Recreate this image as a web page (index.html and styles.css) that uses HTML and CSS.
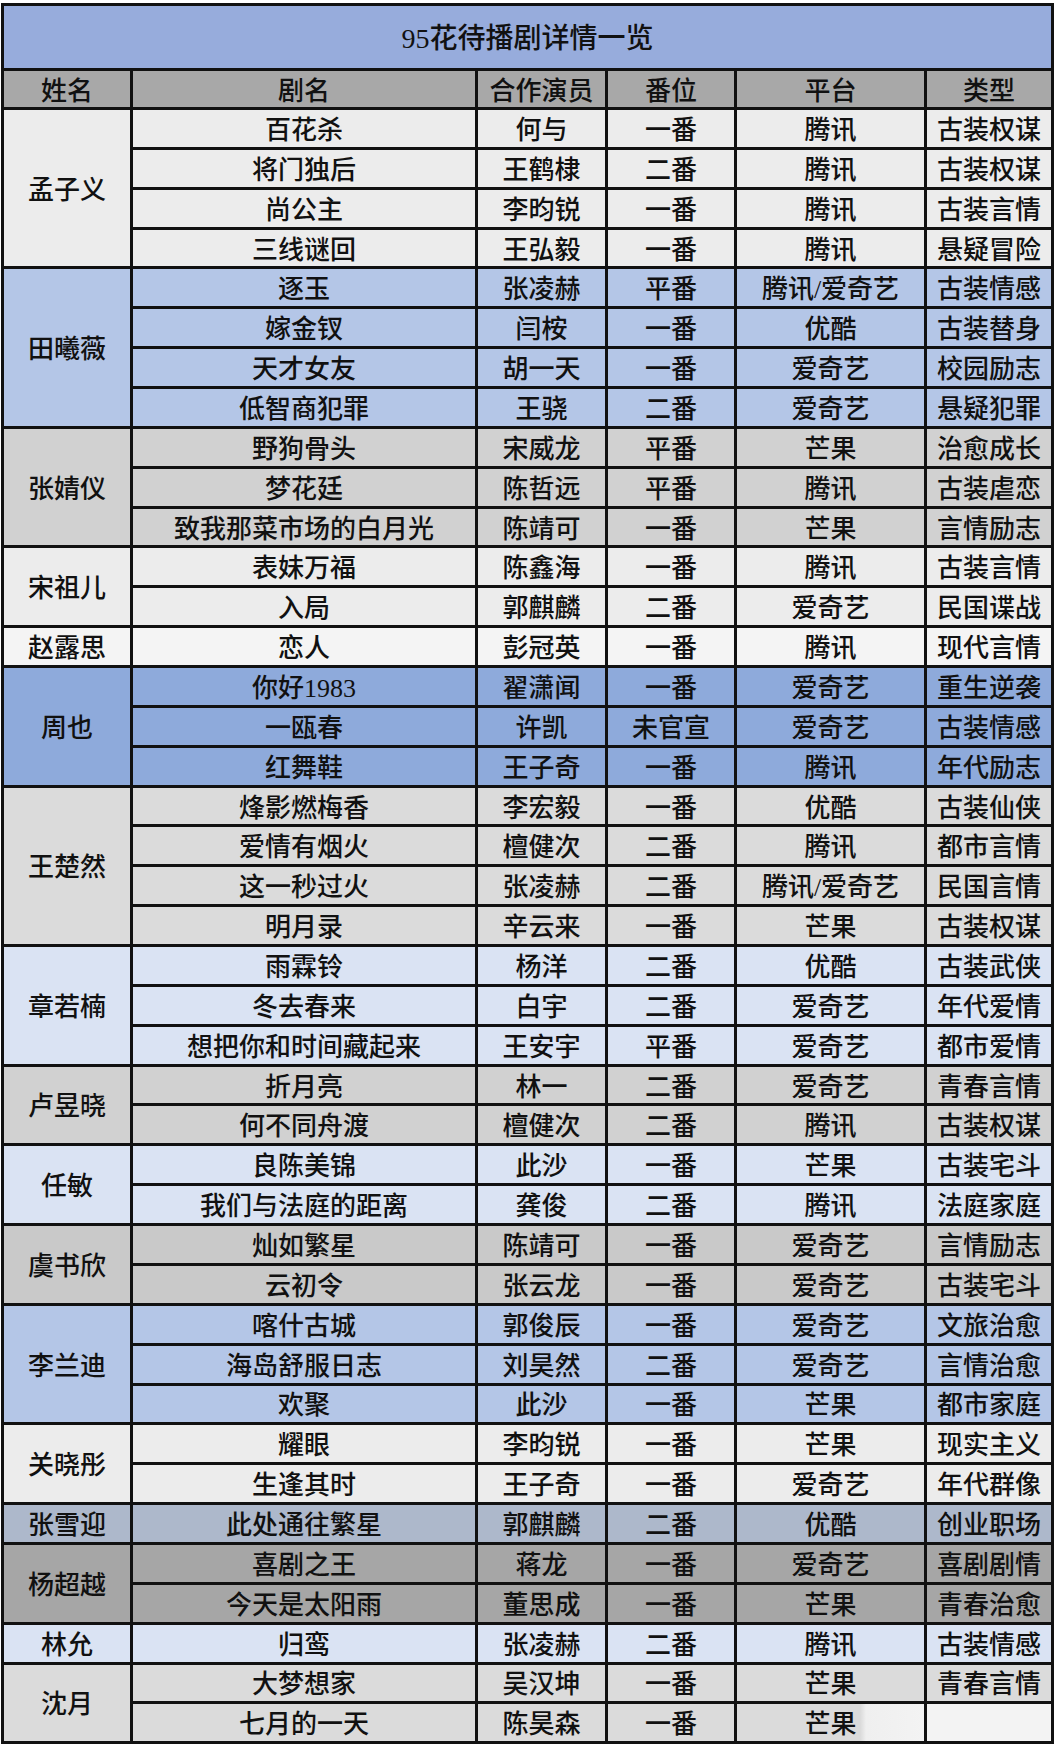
FILE: index.html
```html
<!DOCTYPE html>
<html lang="zh-CN">
<head>
<meta charset="utf-8">
<title>95花待播剧详情一览</title>
<link rel="stylesheet" href="styles.css">
</head>
<body>
<div class="sheet">
  <div class="title">95花待播剧详情一览</div>
  <div class="head">姓名</div><div class="head">剧名</div><div class="head">合作演员</div><div class="head">番位</div><div class="head">平台</div><div class="head">类型</div>

  <div class="grp g-light">
    <div class="cell name span4">孟子义</div>
    <div class="cell">百花杀</div><div class="cell">何与</div><div class="cell">一番</div><div class="cell">腾讯</div><div class="cell">古装权谋</div>
    <div class="cell">将门独后</div><div class="cell">王鹤棣</div><div class="cell">二番</div><div class="cell">腾讯</div><div class="cell">古装权谋</div>
    <div class="cell">尚公主</div><div class="cell">李昀锐</div><div class="cell">一番</div><div class="cell">腾讯</div><div class="cell">古装言情</div>
    <div class="cell">三线谜回</div><div class="cell">王弘毅</div><div class="cell">一番</div><div class="cell">腾讯</div><div class="cell">悬疑冒险</div>
  </div>

  <div class="grp g-blue">
    <div class="cell name span4">田曦薇</div>
    <div class="cell">逐玉</div><div class="cell">张凌赫</div><div class="cell">平番</div><div class="cell">腾讯/爱奇艺</div><div class="cell">古装情感</div>
    <div class="cell">嫁金钗</div><div class="cell">闫桉</div><div class="cell">一番</div><div class="cell">优酷</div><div class="cell">古装替身</div>
    <div class="cell">天才女友</div><div class="cell">胡一天</div><div class="cell">一番</div><div class="cell">爱奇艺</div><div class="cell">校园励志</div>
    <div class="cell">低智商犯罪</div><div class="cell">王骁</div><div class="cell">二番</div><div class="cell">爱奇艺</div><div class="cell">悬疑犯罪</div>
  </div>

  <div class="grp g-mid">
    <div class="cell name span3">张婧仪</div>
    <div class="cell">野狗骨头</div><div class="cell">宋威龙</div><div class="cell">平番</div><div class="cell">芒果</div><div class="cell">治愈成长</div>
    <div class="cell">梦花廷</div><div class="cell">陈哲远</div><div class="cell">平番</div><div class="cell">腾讯</div><div class="cell">古装虐恋</div>
    <div class="cell">致我那菜市场的白月光</div><div class="cell">陈靖可</div><div class="cell">一番</div><div class="cell">芒果</div><div class="cell">言情励志</div>
  </div>

  <div class="grp g-light">
    <div class="cell name span2">宋祖儿</div>
    <div class="cell">表妹万福</div><div class="cell">陈鑫海</div><div class="cell">一番</div><div class="cell">腾讯</div><div class="cell">古装言情</div>
    <div class="cell">入局</div><div class="cell">郭麒麟</div><div class="cell">二番</div><div class="cell">爱奇艺</div><div class="cell">民国谍战</div>
  </div>

  <div class="grp g-white">
    <div class="cell name">赵露思</div>
    <div class="cell">恋人</div><div class="cell">彭冠英</div><div class="cell">一番</div><div class="cell">腾讯</div><div class="cell">现代言情</div>
  </div>

  <div class="grp g-deep">
    <div class="cell name span3">周也</div>
    <div class="cell">你好1983</div><div class="cell">翟潇闻</div><div class="cell">一番</div><div class="cell">爱奇艺</div><div class="cell">重生逆袭</div>
    <div class="cell">一瓯春</div><div class="cell">许凯</div><div class="cell">未官宣</div><div class="cell">爱奇艺</div><div class="cell">古装情感</div>
    <div class="cell">红舞鞋</div><div class="cell">王子奇</div><div class="cell">一番</div><div class="cell">腾讯</div><div class="cell">年代励志</div>
  </div>

  <div class="grp g-soft">
    <div class="cell name span4">王楚然</div>
    <div class="cell">烽影燃梅香</div><div class="cell">李宏毅</div><div class="cell">一番</div><div class="cell">优酷</div><div class="cell">古装仙侠</div>
    <div class="cell">爱情有烟火</div><div class="cell">檀健次</div><div class="cell">二番</div><div class="cell">腾讯</div><div class="cell">都市言情</div>
    <div class="cell">这一秒过火</div><div class="cell">张凌赫</div><div class="cell">二番</div><div class="cell">腾讯/爱奇艺</div><div class="cell">民国言情</div>
    <div class="cell">明月录</div><div class="cell">辛云来</div><div class="cell">一番</div><div class="cell">芒果</div><div class="cell">古装权谋</div>
  </div>

  <div class="grp g-pale">
    <div class="cell name span3">章若楠</div>
    <div class="cell">雨霖铃</div><div class="cell">杨洋</div><div class="cell">二番</div><div class="cell">优酷</div><div class="cell">古装武侠</div>
    <div class="cell">冬去春来</div><div class="cell">白宇</div><div class="cell">二番</div><div class="cell">爱奇艺</div><div class="cell">年代爱情</div>
    <div class="cell">想把你和时间藏起来</div><div class="cell">王安宇</div><div class="cell">平番</div><div class="cell">爱奇艺</div><div class="cell">都市爱情</div>
  </div>

  <div class="grp g-mid">
    <div class="cell name span2">卢昱晓</div>
    <div class="cell">折月亮</div><div class="cell">林一</div><div class="cell">二番</div><div class="cell">爱奇艺</div><div class="cell">青春言情</div>
    <div class="cell">何不同舟渡</div><div class="cell">檀健次</div><div class="cell">二番</div><div class="cell">腾讯</div><div class="cell">古装权谋</div>
  </div>

  <div class="grp g-pale">
    <div class="cell name span2">任敏</div>
    <div class="cell">良陈美锦</div><div class="cell">此沙</div><div class="cell">一番</div><div class="cell">芒果</div><div class="cell">古装宅斗</div>
    <div class="cell">我们与法庭的距离</div><div class="cell">龚俊</div><div class="cell">二番</div><div class="cell">腾讯</div><div class="cell">法庭家庭</div>
  </div>

  <div class="grp g-dark">
    <div class="cell name span2">虞书欣</div>
    <div class="cell">灿如繁星</div><div class="cell">陈靖可</div><div class="cell">一番</div><div class="cell">爱奇艺</div><div class="cell">言情励志</div>
    <div class="cell">云初令</div><div class="cell">张云龙</div><div class="cell">一番</div><div class="cell">爱奇艺</div><div class="cell">古装宅斗</div>
  </div>

  <div class="grp g-blue">
    <div class="cell name span3">李兰迪</div>
    <div class="cell">喀什古城</div><div class="cell">郭俊辰</div><div class="cell">一番</div><div class="cell">爱奇艺</div><div class="cell">文旅治愈</div>
    <div class="cell">海岛舒服日志</div><div class="cell">刘昊然</div><div class="cell">二番</div><div class="cell">爱奇艺</div><div class="cell">言情治愈</div>
    <div class="cell">欢聚</div><div class="cell">此沙</div><div class="cell">一番</div><div class="cell">芒果</div><div class="cell">都市家庭</div>
  </div>

  <div class="grp g-light">
    <div class="cell name span2">关晓彤</div>
    <div class="cell">耀眼</div><div class="cell">李昀锐</div><div class="cell">一番</div><div class="cell">芒果</div><div class="cell">现实主义</div>
    <div class="cell">生逢其时</div><div class="cell">王子奇</div><div class="cell">一番</div><div class="cell">爱奇艺</div><div class="cell">年代群像</div>
  </div>

  <div class="grp g-slate">
    <div class="cell name">张雪迎</div>
    <div class="cell">此处通往繁星</div><div class="cell">郭麒麟</div><div class="cell">二番</div><div class="cell">优酷</div><div class="cell">创业职场</div>
  </div>

  <div class="grp g-gray">
    <div class="cell name span2">杨超越</div>
    <div class="cell">喜剧之王</div><div class="cell">蒋龙</div><div class="cell">一番</div><div class="cell">爱奇艺</div><div class="cell">喜剧剧情</div>
    <div class="cell">今天是太阳雨</div><div class="cell">董思成</div><div class="cell">一番</div><div class="cell">芒果</div><div class="cell">青春治愈</div>
  </div>

  <div class="grp g-pale">
    <div class="cell name">林允</div>
    <div class="cell">归鸾</div><div class="cell">张凌赫</div><div class="cell">二番</div><div class="cell">腾讯</div><div class="cell">古装情感</div>
  </div>

  <div class="grp g-soft">
    <div class="cell name span2">沈月</div>
    <div class="cell">大梦想家</div><div class="cell">吴汉坤</div><div class="cell">一番</div><div class="cell">芒果</div><div class="cell">青春言情</div>
    <div class="cell">七月的一天</div><div class="cell">陈昊森</div><div class="cell">一番</div><div class="cell fade">芒果</div><div class="cell blank"></div>
  </div>
</div>
</body>
</html>
```

FILE: styles.css
```css
html, body {
  margin: 0;
  padding: 0;
  background: #ffffff;
}

body {
  font-family: "Liberation Serif", "Noto Sans CJK SC", serif;
  color: #111111;
}

.sheet {
  display: grid;
  grid-template-columns: 126px 342px 127px 126px 187px 124px;
  grid-template-rows: 62px 36px repeat(41, 36.86px);
  gap: 3px;
  padding: 3px;
  margin: 3px 0 0 1px;
  width: max-content;
  background: #111111;
}

.grp {
  display: contents;
}

.title {
  grid-column: 1 / -1;
  background: #97acdc;
  font-size: 28px;
  font-weight: 500;
  display: flex;
  align-items: center;
  justify-content: center;
  padding-bottom: 2px;
}

.head {
  background: #a8a8a8;
  font-size: 26px;
  font-weight: 500;
  display: flex;
  align-items: center;
  justify-content: center;
  padding-bottom: 2px;
}

.cell {
  background: var(--bg);
  font-size: 26px;
  font-weight: 500;
  display: flex;
  align-items: center;
  justify-content: center;
  white-space: nowrap;
  padding-bottom: 2px;
  box-sizing: border-box;
}

.name { grid-column: 1; }
.span2 { grid-row: span 2; }
.span3 { grid-row: span 3; }
.span4 { grid-row: span 4; }

.g-light { --bg: #ececec; }
.g-blue  { --bg: #b4c6e7; }
.g-mid   { --bg: #d1d1d1; }
.g-white { --bg: #f4f4f4; }
.g-deep  { --bg: #8eaadb; }
.g-soft  { --bg: #dbdbdb; }
.g-pale  { --bg: #dae3f3; }
.g-dark  { --bg: #c9c9c9; }
.g-slate { --bg: #adb8cb; }
.g-gray  { --bg: #a6a6a6; }

.fade {
  background: linear-gradient(90deg, var(--bg) 0, var(--bg) 66%, #efefef 69%, #f3f3f3 100%);
}

.blank {
  background: #f3f3f3;
}
```
